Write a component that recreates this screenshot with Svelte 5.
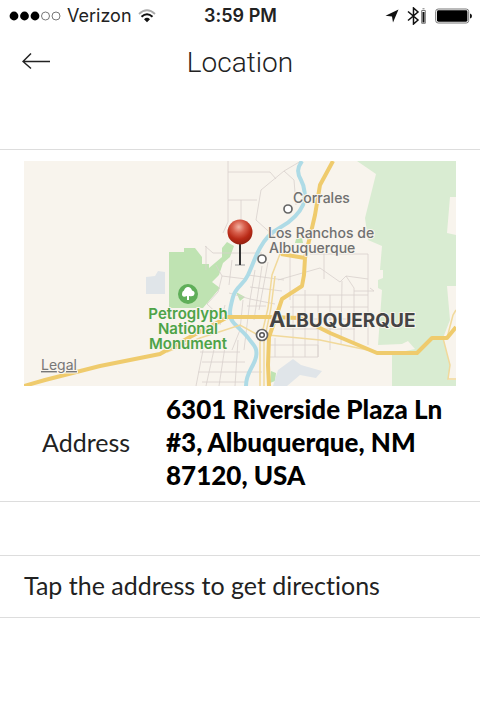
<script>
    let carrier = 'Verizon'
    let time = '3:59 PM'
    let signal = 3

    let address = ['6301 Riverside Plaza Ln', '#3, Albuquerque, NM', '87120, USA']
    let directions = 'https://maps.apple.com/?daddr=' + encodeURIComponent(address.join(' '))

    /* small streets, thin grey lines */
    let streets = [
        'M228 161V222L223 233',
        'M228 172H270L276 179M228 200H257M241 200V222M261 190L256 220L276 238',
        'M301 161L284 171L261 190M284 171L294 180L296 205',
        'M205 246L213 253H262M206 246V270M232 260L229 285',
        'M216 265L222 276L246 279M222 276L218 292L207 304L222 318',
        'M229 293L250 299L275 304M225 305L220 325M243 300L240 330L232 350',
        'M255 270L250 300L244 350M262 266L254 320M268 262L259 310',
        'M248 275L284 280M250 287L282 291M247 306H266M278 280L320 268M290 255V300',
        'M310 254H368V345M324 254V279M320 268L340 282L346 276L354 288V345M346 276L368 279M354 291H374L370 288M342 281L341 345',
        'M293 295H368M290 307H368M290 319H368M284 329H355M293 295V357M305 290V357M318 295V357M330 295V350',
        'M270 345H318M270 357H318V345M275 338V357',
        'M200 352H240M202 362H245M198 372H262M202 382H246M205 340L196 386M215 345L206 386M226 340L219 386M238 340L235 386'
    ]
    let places = [
        { name: 'Corrales', x: 293, y: 203 },
        { name: 'Los Ranchos de', x: 268, y: 238 },
        { name: 'Albuquerque', x: 269, y: 253 }
    ]
    let park = ['Petroglyph', 'National', 'Monument']

    let back = () => history.back()
</script>

<div class="status">
    <div class="left">
        <svg width="52" height="10" viewBox="0 0 52 10" aria-label="Signal">
            {#each [0, 1, 2, 3, 4] as i}
                <circle class={i < signal ? 'dot full' : 'dot'} cx={5 + i * 10.5} cy="5" r={i < signal ? 4.4 : 4} />
            {/each}
        </svg>
        <span>{carrier}</span>
        <svg width="18" height="14" viewBox="0 0 18 14" aria-label="Wi-Fi">
            <path d="M1 5Q9 -2.5 17 5" fill="none" stroke="#aaa" stroke-width="1.8" />
            <path d="M3.5 7.8Q9 2.8 14.5 7.8" fill="none" stroke="#111" stroke-width="2" />
            <path d="M6 10.2Q9 7.4 12 10.2L9 13.3Z" fill="#111" />
        </svg>
    </div>
    <strong>{time}</strong>
    <div class="right">
        <svg width="14" height="14" viewBox="0 0 14 14" aria-label="Location in use">
            <path d="M13.5 .5L8 13.5L7 7.5L.5 6.8Z" fill="#111" />
        </svg>
        <svg width="20" height="18" viewBox="0 0 20 18" aria-label="Bluetooth">
            <path d="M1 4.5L11 13L6.5 17V1L11 5L1 13.5" fill="none" stroke="#111" stroke-width="1.5" />
            <path d="M14.7 3.5H18.3V16.3H14.7ZM15.5 1.8H17.5" fill="none" stroke="#777" />
            <path d="M15.5 5H17.5V15.5H15.5Z" fill="#111" />
        </svg>
        <svg width="37" height="16" viewBox="0 0 37 16" aria-label="Battery">
            <rect x=".7" y="1" width="33" height="14" rx="2.5" fill="none" stroke="#777" />
            <rect x="2" y="2.3" width="30.4" height="11.4" rx="1.4" fill="#000" />
            <path d="M35 5.5Q37 6 37 8Q37 10 35 10.5Z" fill="#111" />
        </svg>
    </div>
</div>

<header>
    <button class="back" aria-label="Back" on:click={back}>
        <svg width="28" height="18" viewBox="0 0 28 18">
            <path d="M28 8.5H1M9 .5L1 8.5L9 15.5" fill="none" stroke="#222" stroke-width="1.5" />
        </svg>
    </button>
    <h1>Location</h1>
</header>

<main>
    <section class="card">
        <svg class="map" viewBox="24 161 432 225" aria-label="Map of Albuquerque">
            <defs>
                <radialGradient id="ball" cx=".45" cy=".3" r=".7">
                    <stop offset="0" stop-color="#f3b3a4" />
                    <stop offset=".35" stop-color="#d8604d" />
                    <stop offset=".7" stop-color="#b92a17" />
                    <stop offset="1" stop-color="#93200f" />
                </radialGradient>
            </defs>
            <rect x="24" y="161" width="432" height="225" fill="#f8f4ed" />

            <!-- parks and lakes -->
            <path class="forest" d="M357 161L376 174L365 218L368 240L382 246L380 270H383V278L378 280V288L382 290L378 345L402 344L408 341L415 349L392 354V386H456V380H448L450 365L443 338L450 320L447 286H456V235L447 233L450 197H456V161Z" />
            <path class="park" d="M169 252H184V248H195L202 257V264H209V268L222 257L222 248L227 242L234 246L230 257L223 263L219 275L212 282L220 288L203 308H169Z" />
            <path class="park" d="M236 292L245 297L240 301ZM271 371L276 373L275 381L270 383ZM296 239L302 238L303 243H295Z" />
            <path class="lake" d="M146 277L155 276L158 271L165 272V294H146ZM273 386L278 370L293 359L301 365L322 371L316 378L300 375L287 386Z" />

            {#each streets as d}
                <path class="street" {d} />
            {/each}

            <path class="river" d="M302 161C297 168 297 173 301 180S306 198 303 205S292 221 281 227S265 239 260 248S253 264 248 275S236 286 233 297S228 316 233 322S245 333 249 339S258 347 256 357S246 372 246 386" />

            <!-- highways -->
            <path class="road" d="M305 258L280 254L272 275L268 308L260 342V386M275 276L271 308L264 342V386" />
            <path class="road" d="M167 352L200 338L222 331L240 325L258 335H268L320 340L377 352M443 338L450 365L448 379H456M447 338L453 315L456 310" />
            <path class="highway" d="M24 386L45 380L100 366L160 354L190 337L228 317H268L300 318L330 333L377 353H417L432 338H447L456 327" />
            <path class="highway" d="M333 161L320 185L315 215L305 258L304 275L302 286L282 299L278 311L269 337L268 365L269 386M305 258L281 254" />

            <circle class="town" cx="288" cy="209" r="4" />
            <circle class="town" cx="262" cy="259" r="4" />
            <circle class="town" cx="262" cy="335" r="5.5" />
            <circle cx="262" cy="335" r="2.3" fill="#fff" stroke="#555" stroke-width="1.5" />

            <circle cx="188" cy="294" r="10" fill="#5fae59" />
            <path d="M187 300V296Q182 298 182 294Q182 291 184 290.5Q185 287 188 287Q191 287 192 290.5Q195 291 194.5 294Q194 297 189 296V300Z" fill="#fff" />

            {#each places as place}
                <text class="place" x={place.x} y={place.y}>{place.name}</text>
            {/each}
            {#each park as line, i}
                <text class="place green" x="188" y={319 + i * 15}>{line}</text>
            {/each}
            <text class="city" x="269" y="327"><tspan class="cap">A</tspan>LBUQUERQUE</text>
            <a href="#legal"><text class="legal" x="41" y="370">Legal</text></a>

            <!-- pin -->
            <path d="M235 265H245" stroke="#999" />
            <path d="M240 243V265" stroke="#333" stroke-width="2" />
            <circle cx="240" cy="232" r="12.5" fill="url(#ball)" />
        </svg>

        <div class="row">
            <span>Address</span>
            <a class="address" href={directions}>
                {#each address as line}
                    <span>{line}</span>
                {/each}
            </a>
        </div>
    </section>

    <p class="hint">Tap the address to get directions</p>
</main>

<style>
    :global(body) {
        margin: 0;
        background: #fff;
        color: #222;
        font-family: Lato, sans-serif;
        font-variant-ligatures: none;
    }

    .status {
        display: grid;
        grid-template-columns: 1fr auto 1fr;
        align-items: center;
        height: 31px;
        padding: 0 8px 0 9px;
        font-family: Inter, sans-serif;
        font-size: 18px;
    }

    .status strong {
        font-weight: 600;
    }

    .left,
    .right {
        display: flex;
        align-items: center;
        gap: 6px;
    }

    .right {
        justify-content: flex-end;
        gap: 8px;
    }

    .dot {
        fill: none;
        stroke: #777;
        stroke-width: 1;
    }

    .dot.full {
        fill: #000;
        stroke: none;
    }

    header {
        display: grid;
        grid-template-columns: 72px 1fr 72px;
        align-items: center;
        height: 62px;
    }

    .back {
        display: flex;
        padding: 8px 22px;
        border: none;
        background: none;
        cursor: pointer;
    }

    h1 {
        margin: 0;
        text-align: center;
        font-family: Roboto, sans-serif;
        font-size: 28px;
        font-weight: 300;
    }

    main {
        margin-top: 56px;
    }

    .card {
        padding: 11px 24px 9px;
        border-top: 1px solid #ddd;
        border-bottom: 1px solid #ddd;
    }

    .map {
        display: block;
        width: 100%;
    }

    .forest {
        fill: #d9ecd2;
    }

    .park {
        fill: #bfe3b2;
    }

    .lake {
        fill: #e0e5e9;
    }

    .street {
        fill: none;
        stroke: #d8d1cd;
        stroke-width: 0.8;
    }

    .river {
        fill: none;
        stroke: #aedbe6;
        stroke-width: 4;
    }

    .road {
        fill: none;
        stroke: #f1d99b;
        stroke-width: 1.5;
    }

    .highway {
        fill: none;
        stroke: #efcb6d;
        stroke-width: 4;
        stroke-linejoin: round;
    }

    .town {
        fill: #fff;
        stroke: #666;
        stroke-width: 1.7;
    }

    text {
        font-family: Inter, sans-serif;
        paint-order: stroke;
        stroke: #f8f4ed;
        stroke-width: 2;
        stroke-linejoin: round;
    }

    .place {
        font-size: 14px;
        font-weight: 500;
        fill: #707070;
    }

    .green {
        font-size: 15px;
        font-weight: 600;
        fill: #4da348;
        text-anchor: middle;
    }

    .city {
        font-size: 19px;
        font-weight: 700;
        fill: #444;
    }

    .cap {
        font-size: 22px;
    }

    .legal {
        font-size: 14px;
        fill: #777;
        text-decoration: underline;
    }

    .row {
        display: grid;
        grid-template-columns: 124px 1fr;
        align-items: center;
        padding: 7px 0 0 18px;
        font-size: 25px;
        line-height: 33px;
    }

    .address {
        color: #000;
        font-size: 26px;
        font-weight: 900;
        text-decoration: none;
        white-space: nowrap;
    }

    .address span {
        display: block;
    }

    .hint {
        margin: 53px 0 0;
        padding: 13px 24px 15px;
        border-top: 1px solid #ddd;
        border-bottom: 1px solid #ddd;
        font-size: 25px;
        line-height: 33px;
    }
</style>
